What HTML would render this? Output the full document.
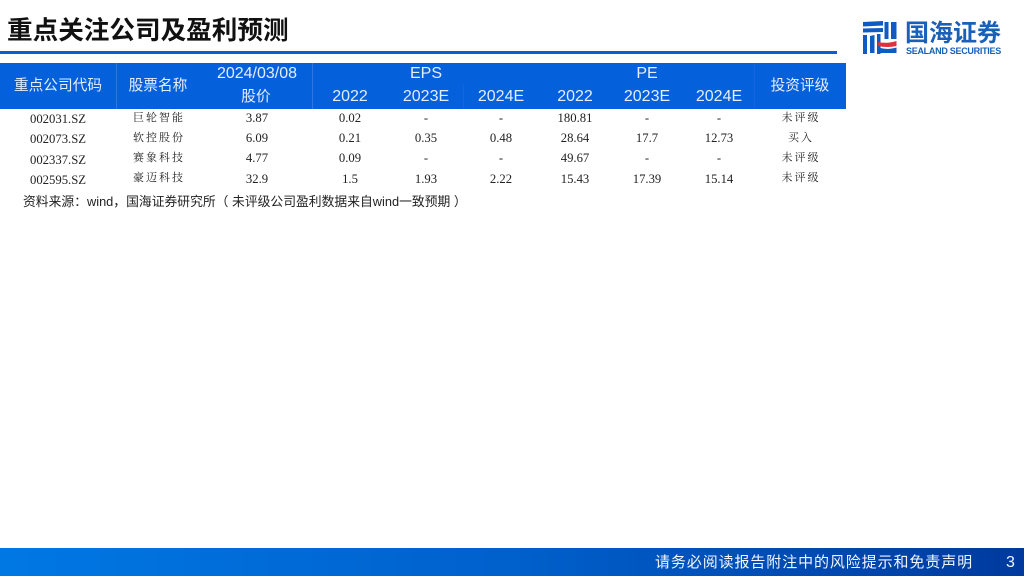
<!DOCTYPE html>
<html><head><meta charset="utf-8"><style>
html,body{margin:0;padding:0;background:#fff}
body{width:1024px;height:576px;position:relative;overflow:hidden;font-family:"Liberation Sans","Noto Sans CJK SC",sans-serif}
.a{position:absolute;white-space:nowrap}
.c{position:absolute;white-space:nowrap;transform:translate(-50%,-50%)}
.h{color:#e4eefc;font-size:16px;line-height:20px}
.d{color:#222;font-family:"Liberation Serif","Noto Serif CJK SC",serif;font-size:12.7px;line-height:14px}
.z{color:#222;font-family:"Liberation Serif","Noto Serif CJK SC",serif;font-size:11px;line-height:14px;letter-spacing:2px}
.v{position:absolute;width:1px;background:#1565de}
</style></head><body>
<div class="a" style="left:7px;top:14px;font-size:25.6px;line-height:34px;font-weight:700;color:#111">重点关注公司及盈利预测</div>
<div class="a" style="left:0;top:51px;width:837px;height:3px;background:#0a5fd0"></div>

<svg class="a" style="left:862px;top:20px" width="36" height="36" viewBox="0 0 36 36">
<g fill="#0f5bc4">
<path d="M1 2 L21 1 L21 5.5 L1 6.5 Z"/>
<path d="M1 8.5 L21 8 L21 12 L1 12.5 Z"/>
<path d="M1 15 L5 15 L5 34 L1 34 Z"/>
<path d="M8 16 L12.5 15 L12.5 33 L8 33 Z"/>
<path d="M15 14 L18.5 14 L18.5 34 L15 34 Z"/>
<path d="M22.5 2 L26.5 2 L26.5 19 L22.5 19 Z"/>
<path d="M29 2 L34.5 2 L34.5 19 L29 19 Z"/>
<path d="M18.5 28 Q26 30 34.5 27.5 L34.5 33 L18.5 33 Z"/>
</g>
<path d="M16 22 Q25 24 34.5 21 L34.5 26 Q25 28 16 26 Z" fill="#e0303c"/>
</svg>
<div class="a" style="left:905px;top:19px;font-size:24px;line-height:30px;font-weight:700;color:#1a5fb8">国海证券</div>
<div class="a" style="left:906px;top:46px;font-size:9px;line-height:10px;font-weight:700;color:#1a5fb8;letter-spacing:-.28px">SEALAND SECURITIES</div>

<div class="a" style="left:0;top:63px;width:846px;height:46px;background:#0560dc"></div>
<div class="v" style="left:116px;top:63px;height:46px;background:#2f78e0"></div>
<div class="v" style="left:312px;top:63px;height:46px;background:#2f78e0"></div>
<div class="v" style="left:463px;top:85px;height:24px"></div>
<div class="v" style="left:754px;top:63px;height:46px"></div>

<div class="c h" style="left:58px;top:86px;font-size:14.7px">重点公司代码</div>
<div class="c h" style="left:158px;top:86px;font-size:14.7px">股票名称</div>
<div class="c h" style="left:257px;top:74px">2024/03/08</div>
<div class="c h" style="left:256px;top:97px;font-size:14.7px">股价</div>
<div class="c h" style="left:426px;top:74px">EPS</div>
<div class="c h" style="left:350px;top:97px">2022</div>
<div class="c h" style="left:426px;top:97px">2023E</div>
<div class="c h" style="left:501px;top:97px">2024E</div>
<div class="c h" style="left:647px;top:74px">PE</div>
<div class="c h" style="left:575px;top:97px">2022</div>
<div class="c h" style="left:647px;top:97px">2023E</div>
<div class="c h" style="left:719px;top:97px">2024E</div>
<div class="c h" style="left:800px;top:86px;font-size:14.7px">投资评级</div>

<div class="c d" style="left:58px;top:119px">002031.SZ</div>
<div class="c z" style="left:159px;top:118px">巨轮智能</div>
<div class="c d" style="left:257px;top:118px">3.87</div>
<div class="c d" style="left:350px;top:118px">0.02</div>
<div class="c d" style="left:426px;top:118px">-</div>
<div class="c d" style="left:501px;top:118px">-</div>
<div class="c d" style="left:575px;top:118px">180.81</div>
<div class="c d" style="left:647px;top:118px">-</div>
<div class="c d" style="left:719px;top:118px">-</div>
<div class="c z" style="left:801px;top:118px">未评级</div>

<div class="c d" style="left:58px;top:139px">002073.SZ</div>
<div class="c z" style="left:159px;top:138px">软控股份</div>
<div class="c d" style="left:257px;top:138px">6.09</div>
<div class="c d" style="left:350px;top:138px">0.21</div>
<div class="c d" style="left:426px;top:138px">0.35</div>
<div class="c d" style="left:501px;top:138px">0.48</div>
<div class="c d" style="left:575px;top:138px">28.64</div>
<div class="c d" style="left:647px;top:138px">17.7</div>
<div class="c d" style="left:719px;top:138px">12.73</div>
<div class="c z" style="left:801px;top:138px">买入</div>

<div class="c d" style="left:58px;top:160px">002337.SZ</div>
<div class="c z" style="left:159px;top:158px">赛象科技</div>
<div class="c d" style="left:257px;top:158px">4.77</div>
<div class="c d" style="left:350px;top:158px">0.09</div>
<div class="c d" style="left:426px;top:158px">-</div>
<div class="c d" style="left:501px;top:158px">-</div>
<div class="c d" style="left:575px;top:158px">49.67</div>
<div class="c d" style="left:647px;top:158px">-</div>
<div class="c d" style="left:719px;top:158px">-</div>
<div class="c z" style="left:801px;top:158px">未评级</div>

<div class="c d" style="left:58px;top:180px">002595.SZ</div>
<div class="c z" style="left:159px;top:178px">豪迈科技</div>
<div class="c d" style="left:257px;top:179px">32.9</div>
<div class="c d" style="left:350px;top:179px">1.5</div>
<div class="c d" style="left:426px;top:179px">1.93</div>
<div class="c d" style="left:501px;top:179px">2.22</div>
<div class="c d" style="left:575px;top:179px">15.43</div>
<div class="c d" style="left:647px;top:179px">17.39</div>
<div class="c d" style="left:719px;top:179px">15.14</div>
<div class="c z" style="left:801px;top:178px">未评级</div>

<div class="a" style="left:23px;top:194px;font-size:12.8px;line-height:16px;color:#222">资料来源：wind，国海证券研究所（ 未评级公司盈利数据来自wind一致预期 ）</div>

<div class="a" style="left:0;top:548px;width:1024px;height:28px;background:linear-gradient(90deg,#0078e4 0%,#0060cc 50%,#003a9e 100%)"></div>
<div class="a" style="left:655px;top:553px;font-size:15px;line-height:20px;color:#f0f5ff;letter-spacing:.9px">请务必阅读报告附注中的风险提示和免责声明</div>
<div class="a" style="left:1006px;top:553px;font-size:16px;line-height:20px;color:#f0f5ff">3</div>
</body></html>
